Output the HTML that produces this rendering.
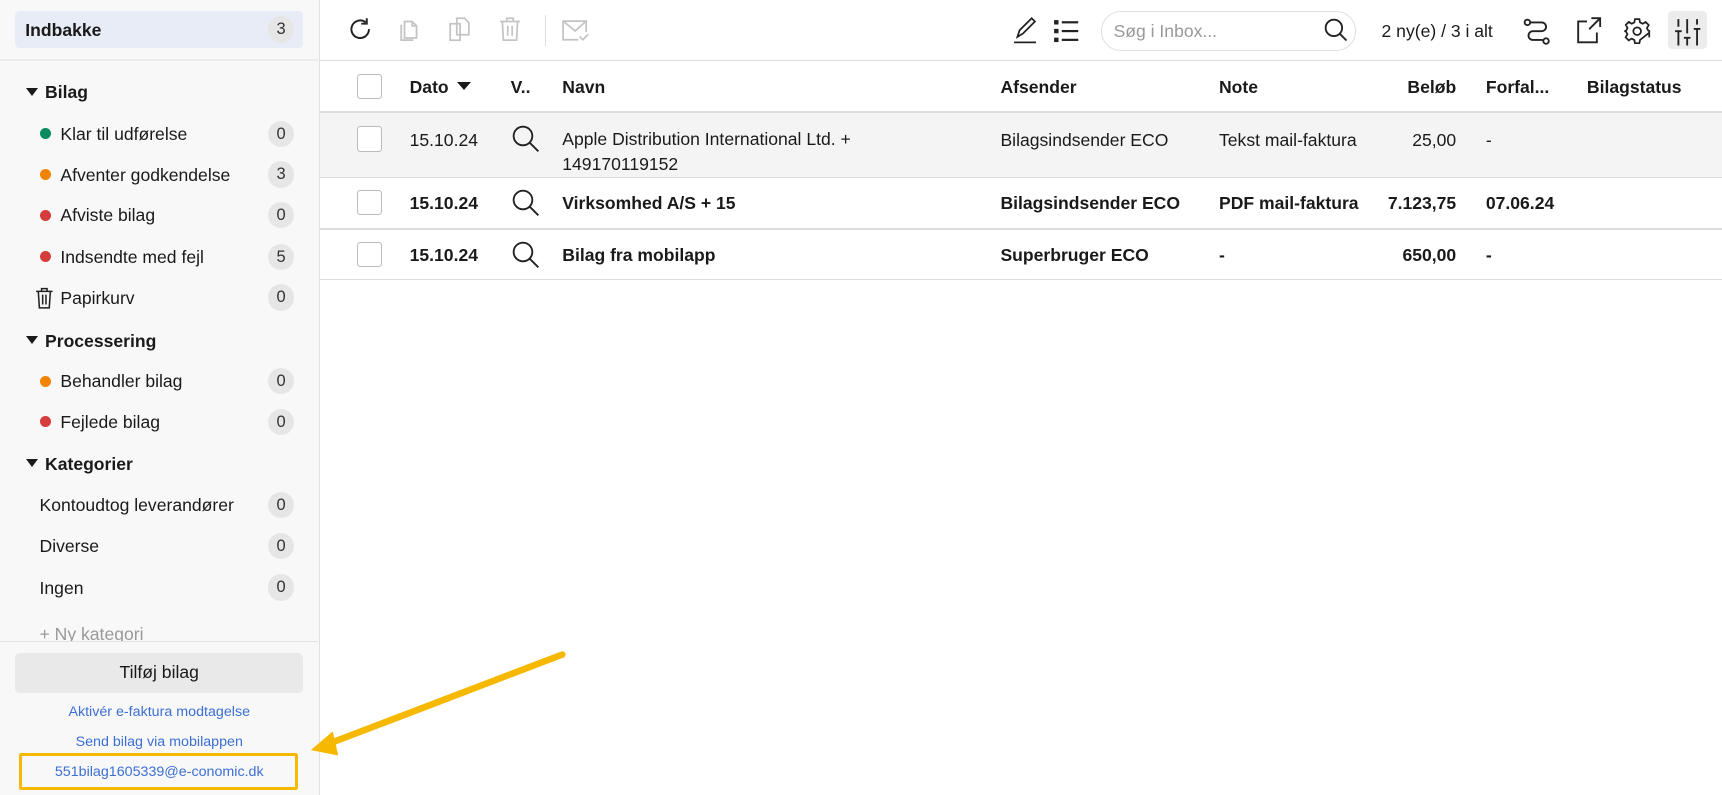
<!DOCTYPE html>
<html><head><meta charset="utf-8"><style>
*{box-sizing:border-box;margin:0;padding:0}
html,body{width:1722px;height:795px;overflow:hidden;background:#fff}
#w{zoom:1.0982;width:1568px;height:724px;position:relative;font-family:"Liberation Sans",Arial,sans-serif;color:#1a1a1a;font-size:16px}
.a{position:absolute;white-space:nowrap}
#sb{position:absolute;left:0;top:0;width:291px;height:724px;background:#f8f8f8;border-right:1px solid #e2e2e2}
.badge{position:absolute;left:244px;width:24px;height:24px;border-radius:12px;background:#e6e6e6;text-align:center;line-height:24px;font-size:15px;color:#333}
.dot{position:absolute;left:36px;width:10px;height:10px;border-radius:5px}
.tri{position:absolute;left:24px;width:0;height:0;border-left:6px solid transparent;border-right:6px solid transparent;border-top:8px solid #1a1a1a}
.hd{font-weight:bold}
.lnk{position:absolute;left:0;width:290px;text-align:center;color:#3b6fd4;font-size:13px}
.cb{position:absolute;left:325px;width:23px;height:23px;border:1px solid #bbb;border-radius:3px;background:#fff}
.hl{position:absolute;left:291px;right:0;height:1px;background:#dcdcdc}
.b{font-weight:bold}
</style></head><body><div id="w">
<div id="sb">
 <div class="a" style="left:14px;top:10px;width:262px;height:34px;background:#e8ecf6;border-radius:4px"></div>
 <div class="a hd" style="left:23px;top:18px">Indbakke</div>
 <div class="badge" style="top:15px">3</div>
 <div class="a" style="left:0;top:54px;width:290px;height:2px;background:#ececec"></div>
 <div class="tri" style="top:80px"></div><div class="a hd" style="left:41px;top:75px">Bilag</div>
 <div class="dot" style="top:117px;background:#0a8a5f"></div><div class="a" style="left:55px;top:113px">Klar til udførelse</div><div class="badge" style="top:110px">0</div>
 <div class="dot" style="top:154px;background:#f08300"></div><div class="a" style="left:55px;top:150px">Afventer godkendelse</div><div class="badge" style="top:147px">3</div>
 <div class="dot" style="top:191px;background:#d63c3c"></div><div class="a" style="left:55px;top:187px">Afviste bilag</div><div class="badge" style="top:184px">0</div>
 <div class="dot" style="top:229px;background:#d63c3c"></div><div class="a" style="left:55px;top:225px">Indsendte med fejl</div><div class="badge" style="top:222px">5</div>
 <svg class="a" style="left:32px;top:261px" width="17" height="20" viewBox="0 0 17 20" fill="none" stroke="#222" stroke-width="1.4"><path d="M1 4h15M6 4V1.5h5V4M3 4l1 15h9l1-15M7 7v9M10 7v9"/></svg>
 <div class="a" style="left:55px;top:262px">Papirkurv</div><div class="badge" style="top:259px">0</div>
 <div class="tri" style="top:306px"></div><div class="a hd" style="left:41px;top:301px">Processering</div>
 <div class="dot" style="top:342px;background:#f08300"></div><div class="a" style="left:55px;top:338px">Behandler bilag</div><div class="badge" style="top:335px">0</div>
 <div class="dot" style="top:379px;background:#d63c3c"></div><div class="a" style="left:55px;top:375px">Fejlede bilag</div><div class="badge" style="top:372px">0</div>
 <div class="tri" style="top:418px"></div><div class="a hd" style="left:41px;top:413px">Kategorier</div>
 <div class="a" style="left:36px;top:451px">Kontoudtog leverandører</div><div class="badge" style="top:448px">0</div>
 <div class="a" style="left:36px;top:488px">Diverse</div><div class="badge" style="top:485px">0</div>
 <div class="a" style="left:36px;top:526px">Ingen</div><div class="badge" style="top:523px">0</div>
 <div class="a" style="left:36px;top:568px;color:#999;height:16px;overflow:hidden">+ Ny kategori</div>
 <div class="a" style="left:0;top:584px;width:290px;height:140px;background:#f8f8f8;border-top:1px solid #e2e2e2"></div>
 <div class="a" style="left:14px;top:595px;width:262px;height:36px;background:#e9e9e9;border-radius:4px;text-align:center;line-height:36px;font-size:16px">Tilføj bilag</div>
 <div class="lnk" style="top:641px">Aktivér e-faktura modtagelse</div>
 <div class="lnk" style="top:668px">Send bilag via mobilappen</div>
 <div class="a" style="left:17px;top:686px;width:254px;height:33px;border:3px solid #f7b900;border-radius:2px"></div>
 <div class="lnk" style="top:696px">551bilag1605339@e-conomic.dk</div>
</div>
<svg class="a" style="left:0;top:0" width="1568" height="724"><path d="M512 596L300 677" stroke="#f7b900" stroke-width="6" stroke-linecap="round"/><path d="M283 683L303 666L308 688Z" fill="#f7b900"/></svg>
<!-- toolbar -->
<svg class="a" style="left:316px;top:15px" width="24" height="24" viewBox="0 0 24 24" fill="none" stroke="#222" stroke-width="1.8"><path d="M20 12a8 8 0 1 1-3-6.2"/><path d="M18 2v5h-5"/></svg>
<svg class="a" style="left:363px;top:15px" width="22" height="24" viewBox="0 0 22 24" fill="none" stroke="#c4c4c4" stroke-width="1.6"><path d="M5 5h7l4 4v11H5z M12 5v4h4M2 8v14h11"/></svg>
<svg class="a" style="left:408px;top:14px" width="22" height="26" viewBox="0 0 22 26" fill="none" stroke="#c4c4c4" stroke-width="1.6"><path d="M8 3h7l4 4v11H8zM2 8h9v15H2z"/></svg>
<svg class="a" style="left:454px;top:15px" width="20" height="24" viewBox="0 0 20 24" fill="none" stroke="#c4c4c4" stroke-width="1.6"><path d="M1 5h18M7 5V2h6v3M3 5l1 17h12l1-17M8 9v9M12 9v9"/></svg>
<div class="a" style="left:496px;top:14px;width:1px;height:28px;background:#ddd"></div>
<svg class="a" style="left:512px;top:18px" width="26" height="20" viewBox="0 0 26 20" fill="none" stroke="#c4c4c4" stroke-width="1.6"><path d="M22 11V1H1v17h14M1 1l11 9 10-9M16 15l3 3 5-5"/></svg>
<svg class="a" style="left:922px;top:15px" width="24" height="26" viewBox="0 0 24 26" fill="none" stroke="#222" stroke-width="1.6"><path d="M4 19l2-6L17 2l3 3L9 16z M1 24h20"/></svg>
<svg class="a" style="left:959px;top:17px" width="24" height="22" viewBox="0 0 24 22" fill="#222"><rect x="1" y="1" width="4" height="4"/><rect x="1" y="9" width="4" height="4"/><rect x="1" y="17" width="4" height="4"/><rect x="8" y="2" width="15" height="2"/><rect x="8" y="10" width="15" height="2"/><rect x="8" y="18" width="15" height="2"/></svg>
<div class="a" style="left:1003px;top:10px;width:232px;height:36px;border:1px solid #e0e0e0;border-radius:18px"></div>
<div class="a" style="left:1014px;top:19px;color:#999">Søg i Inbox...</div>
<svg class="a" style="left:1206px;top:16px" width="22" height="22" viewBox="0 0 22 22" fill="none" stroke="#222" stroke-width="1.7"><circle cx="9" cy="9" r="7.5"/><path d="M14.5 14.5l6 6"/></svg>
<div class="a" style="left:1258px;top:19px">2 ny(e) / 3 i alt</div>
<svg class="a" style="left:1387px;top:16px" width="26" height="26" viewBox="0 0 26 26" fill="none" stroke="#222" stroke-width="1.7"><circle cx="4" cy="4" r="2.5"/><circle cx="21" cy="21" r="2.5"/><path d="M7 4h10a4 4 0 0 1 0 8H9a4 4 0 0 0 0 8h9"/></svg>
<svg class="a" style="left:1435px;top:15px" width="24" height="26" viewBox="0 0 24 26" fill="none" stroke="#222" stroke-width="1.7"><path d="M10 5H2v19h17v-9M14 2h8v8M22 2L12 12"/></svg>
<svg class="a" style="left:1479px;top:16px" width="24" height="24" viewBox="0 0 24 24" fill="none" stroke="#222" stroke-width="1.6"><circle cx="12" cy="12" r="3.5"/><path d="M10 1h4l.6 3 2.4 1.2 2.7-1.6 2.8 2.8-1.6 2.7L22 11.4l1 .6v0 0 .6-1 .6-1.2 2.4 1.6 2.7-2.8 2.8-2.7-1.6L14.6 20 14 23h-4l-.6-3L7 18.8l-2.7 1.6-2.8-2.8 1.6-2.7L2 12.6 1 12l1-.6 1.2-2.4-1.6-2.7 2.8-2.8L7 5.2 9.4 4z"/></svg>
<div class="a" style="left:1519px;top:10px;width:35px;height:35px;background:#ececec;border-radius:4px"></div>
<svg class="a" style="left:1524px;top:16px" width="25" height="26" viewBox="0 0 25 26" fill="none" stroke="#222" stroke-width="1.7"><path d="M4 1v7M4 12v13M1 12h6M12 1v13M12 18v7M9 18h6M21 1v5M21 10v15M18 10h6"/></svg>
<div class="hl" style="top:55px"></div>
<!-- table header -->
<div class="cb" style="top:67px"></div>
<div class="a b" style="left:373px;top:70px">Dato</div>
<div class="a" style="left:416px;top:75px;border-left:7px solid transparent;border-right:7px solid transparent;border-top:8px solid #1a1a1a"></div>
<div class="a b" style="left:465px;top:70px">V..</div>
<div class="a b" style="left:512px;top:70px">Navn</div>
<div class="a b" style="left:911px;top:70px">Afsender</div>
<div class="a b" style="left:1110px;top:70px">Note</div>
<div class="a b" style="left:1226px;top:70px;width:100px;text-align:right">Beløb</div>
<div class="a b" style="left:1353px;top:70px">Forfal...</div>
<div class="a b" style="left:1445px;top:70px">Bilagstatus</div>
<div class="hl" style="top:101px;height:2px;background:#ddd"></div>
<!-- row1 -->
<div class="a" style="left:291px;top:103px;right:0;height:58px;background:#f4f4f4"></div>
<div class="cb" style="top:115px"></div>
<div class="a" style="left:373px;top:118px">15.10.24</div>
<svg class="a" style="left:466px;top:114px" width="25" height="25" viewBox="0 0 25 25" fill="none" stroke="#222" stroke-width="1.7"><circle cx="10" cy="10" r="8.5"/><path d="M16 16l8 8"/></svg>
<div class="a" style="left:512px;top:116px;line-height:22px">Apple Distribution International Ltd. +<br>149170119152</div>
<div class="a" style="left:911px;top:118px">Bilagsindsender ECO</div>
<div class="a" style="left:1110px;top:118px">Tekst mail-faktura</div>
<div class="a" style="left:1226px;top:118px;width:100px;text-align:right">25,00</div>
<div class="a" style="left:1353px;top:118px">-</div>
<div class="hl" style="top:161px"></div>
<!-- row2 -->
<div class="cb" style="top:173px"></div>
<div class="a b" style="left:373px;top:176px">15.10.24</div>
<svg class="a" style="left:466px;top:172px" width="25" height="25" viewBox="0 0 25 25" fill="none" stroke="#222" stroke-width="1.7"><circle cx="10" cy="10" r="8.5"/><path d="M16 16l8 8"/></svg>
<div class="a b" style="left:512px;top:176px">Virksomhed A/S + 15</div>
<div class="a b" style="left:911px;top:176px">Bilagsindsender ECO</div>
<div class="a b" style="left:1110px;top:176px">PDF mail-faktura</div>
<div class="a b" style="left:1226px;top:176px;width:100px;text-align:right">7.123,75</div>
<div class="a b" style="left:1353px;top:176px">07.06.24</div>
<div class="hl" style="top:208px"></div>
<!-- row3 -->
<div class="cb" style="top:220px"></div>
<div class="a b" style="left:373px;top:223px">15.10.24</div>
<svg class="a" style="left:466px;top:219px" width="25" height="25" viewBox="0 0 25 25" fill="none" stroke="#222" stroke-width="1.7"><circle cx="10" cy="10" r="8.5"/><path d="M16 16l8 8"/></svg>
<div class="a b" style="left:512px;top:223px">Bilag fra mobilapp</div>
<div class="a b" style="left:911px;top:223px">Superbruger ECO</div>
<div class="a b" style="left:1110px;top:223px">-</div>
<div class="a b" style="left:1226px;top:223px;width:100px;text-align:right">650,00</div>
<div class="a b" style="left:1353px;top:223px">-</div>
<div class="hl" style="top:254px"></div>
</div></body></html>
